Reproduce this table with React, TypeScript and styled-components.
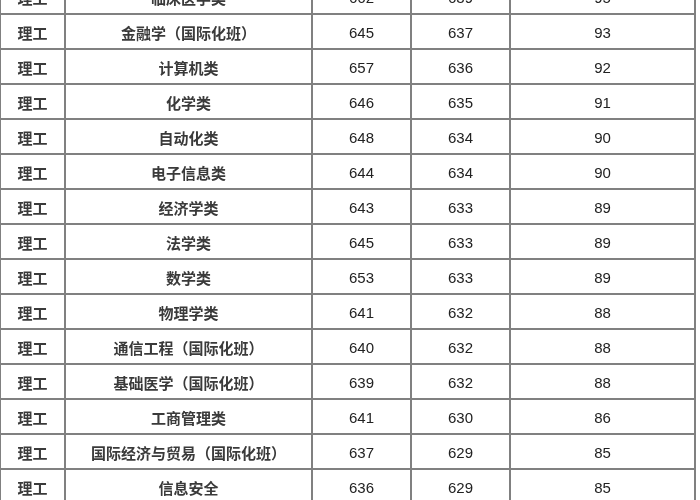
import React from 'react';
import styled, { createGlobalStyle } from 'styled-components';

const GlobalStyle = createGlobalStyle`
  html, body {
    margin: 0;
    padding: 0;
    background: #ffffff;
  }
  body {
    font-family: 'Liberation Sans', 'Noto Sans CJK SC', sans-serif;
  }
`;

const Viewport = styled.div`
  width: 700px;
  height: 500px;
  overflow: hidden;
  background: #ffffff;
`;

const Table = styled.table`
  margin-top: -22px;
  margin-left: -1px;
  border-collapse: collapse;
  table-layout: fixed;
  width: 695px;
  color: #2b2b2b;
  filter: blur(0.35px);
`;

const Col = styled.col<{ $w: number }>`
  width: ${(p) => p.$w}px;
`;

const Row = styled.tr`
  height: 35px;
`;

const Cell = styled.td<{ $cjk?: boolean }>`
  border: 2px solid #808080;
  padding: 2px 0 0 0;
  text-align: center;
  vertical-align: middle;
  white-space: nowrap;
  font-size: 15px;
  line-height: 1;
  font-family: ${(p) =>
    p.$cjk
      ? "'Noto Sans CJK SC', sans-serif"
      : "'Liberation Sans', 'Noto Sans CJK SC', sans-serif"};
  font-weight: ${(p) => (p.$cjk ? 700 : 400)};
  color: ${(p) => (p.$cjk ? '#3a3a3a' : '#222222')};
`;

type Major = {
  name: string;
  max: number;
  min: number;
  rank: number;
};

const majors: Major[] = [
  { name: '临床医学类', max: 662, min: 639, rank: 95 },
  { name: '金融学（国际化班）', max: 645, min: 637, rank: 93 },
  { name: '计算机类', max: 657, min: 636, rank: 92 },
  { name: '化学类', max: 646, min: 635, rank: 91 },
  { name: '自动化类', max: 648, min: 634, rank: 90 },
  { name: '电子信息类', max: 644, min: 634, rank: 90 },
  { name: '经济学类', max: 643, min: 633, rank: 89 },
  { name: '法学类', max: 645, min: 633, rank: 89 },
  { name: '数学类', max: 653, min: 633, rank: 89 },
  { name: '物理学类', max: 641, min: 632, rank: 88 },
  { name: '通信工程（国际化班）', max: 640, min: 632, rank: 88 },
  { name: '基础医学（国际化班）', max: 639, min: 632, rank: 88 },
  { name: '工商管理类', max: 641, min: 630, rank: 86 },
  { name: '国际经济与贸易（国际化班）', max: 637, min: 629, rank: 85 },
  { name: '信息安全', max: 636, min: 629, rank: 85 },
];

const columnWidths = [65, 247, 99, 99, 185];

const App: React.FC = () => {
  return (
    <Viewport>
      <GlobalStyle />
      <Table>
        <colgroup>
          {columnWidths.map((w, i) => (
            <Col key={i} $w={w} />
          ))}
        </colgroup>
        <tbody>
          {majors.map((m) => (
            <Row key={m.name}>
              <Cell $cjk>理工</Cell>
              <Cell $cjk>{m.name}</Cell>
              <Cell>{m.max}</Cell>
              <Cell>{m.min}</Cell>
              <Cell>{m.rank}</Cell>
            </Row>
          ))}
        </tbody>
      </Table>
    </Viewport>
  );
};

export default App;
